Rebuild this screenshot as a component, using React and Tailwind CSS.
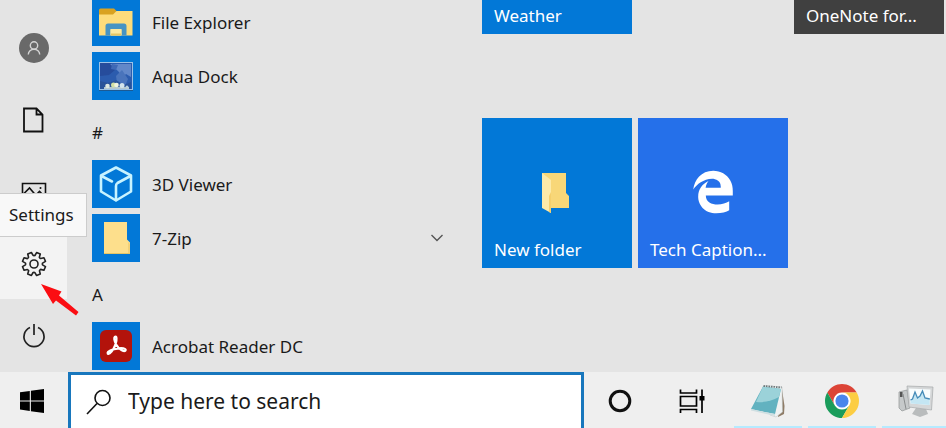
import React, { useState } from 'react';
import { FaEdgeLegacy } from 'react-icons/fa6';

const FileExplorerIcon = () => (
  <svg width="48" height="48" viewBox="0 0 48 48" aria-hidden="true">
    <path d="M7 12 a1.500 1.500 0 0 1 1.500-1.500 H22 l2.500 2.500 V17 H7z" fill="#d9a220" />
    <path d="M7 16.500 H21 L24.500 13 H40.500 V37.500 H7z" fill="#fddc7b" />
    <path d="M13.500 37.500 V28 a2.500 2.500 0 0 1 2.500-2.500 h16 a2.500 2.500 0 0 1 2.500 2.500 v9.500 h-5 V31.500 H18.500 v6z" fill="#4694c4" />
    <path d="M18.500 31 h11 v6.500 h-11z" fill="#fde9a0" />
    <path d="M19 35.500 h10 v2 h-10z" fill="#e6c664" />
  </svg>
);

const AquaDockIcon = () => (
  <svg width="48" height="48" viewBox="0 0 48 48" aria-hidden="true">
    <rect x="7" y="10" width="34" height="29" fill="#1c5a94" />
    <rect x="7.500" y="10.500" width="33" height="27" fill="#2c5cae" />
    <path d="M8 11 h11 l4 7 -6 5 -9 1z" fill="#264c9c" />
    <path d="M18 12 h21 v13 l-5 -3 -3 3 -5 -6z" fill="#6288c9" />
    <path d="M20 12 l6 1 -2 5 -5 -1z" fill="#3f69b6" />
    <path d="M24 24 l6 -6 6 9 -3 7 -8 -3z" fill="#4a74bb" />
    <path d="M8 29 l8 2 8 -3 8 5 7 -3 v7 H8z" fill="#2a5399" />
    <rect x="7.500" y="10.500" width="33" height="27" fill="none" stroke="#9cc2e7" />
    <path d="M12 36 h25" stroke="#b3c6cf" strokeWidth="2" />
    <circle cx="15.500" cy="34" r="2.300" fill="#dfe9e2" />
    <circle cx="21.500" cy="33" r="2.500" fill="#d3dfa3" />
    <circle cx="24.500" cy="33" r="2.300" fill="#f0f3df" />
    <circle cx="30" cy="33.500" r="2.500" fill="#d4e4ec" />
    <circle cx="35" cy="35" r="1.500" fill="#b9d0dc" />
  </svg>
);

const CubeIcon = () => (
  <svg width="48" height="48" viewBox="0 0 48 48" fill="none" stroke="#c8f3ff" strokeWidth="2.600" strokeLinejoin="round" strokeLinecap="round" aria-hidden="true">
    <path d="M24 7.500 L39 15.500 V31.500 L24 40.500 L9 31.500 V15.500z" />
    <path d="M9.500 16 L20 21.500 M38.500 16 L25.500 23 Q24 24 24 26 V40" />
  </svg>
);

const ZipFolderIcon = () => (
  <svg width="48" height="48" viewBox="0 0 48 48" aria-hidden="true">
    <path d="M12 8 H35 V25.500 L38 28.500 V40 H12z" fill="#fddf8c" />
    <path d="M36 28 L38 30 V40 H36z" fill="#f2d077" />
    <path d="M12 39 H38 V40 H12z" fill="#e5c568" />
  </svg>
);

const AcrobatIcon = () => (
  <svg width="48" height="48" viewBox="0 0 48 48" aria-hidden="true">
    <rect x="8" y="8" width="32" height="32" rx="6" fill="#b3130b" />
    <path
      d="M22.700 15 c2-1.500 2.500 2 .8 7.500 C21.500 28 17.500 33 15.800 31.600 C14.500 29.500 20 27 27 26.300 C33 25.800 34.500 27.500 33.300 28.800 C31 30.200 26.500 26.500 24.200 22.500 C22.500 19 21.600 16 22.700 15z"
      fill="none"
      stroke="#fff"
      strokeWidth="2.200"
      strokeLinejoin="round"
    />
  </svg>
);

const UserIcon = () => (
  <svg width="30" height="30" viewBox="0 0 30 30" fill="none" aria-hidden="true">
    <circle cx="15" cy="15" r="15" fill="#696969" />
    <circle cx="15" cy="12.500" r="3.700" stroke="#d4d4d4" strokeWidth="1.400" />
    <path d="M9.300 21.500 a5.700 5.200 0 0 1 11.400 0" stroke="#d4d4d4" strokeWidth="1.400" />
  </svg>
);

const DocumentIcon = () => (
  <svg width="24" height="26" viewBox="0 0 24 26" fill="none" stroke="#111" strokeWidth="1.800" aria-hidden="true">
    <path d="M2 1.500 H14.500 L20.500 7.500 V24.500 H2z M14.500 1.500 V7.500 H20.500" />
  </svg>
);

const PicturesIcon = () => (
  <svg width="26" height="20" viewBox="0 0 26 20" fill="none" stroke="#111" strokeWidth="1.600" aria-hidden="true">
    <path d="M1.500 1.500 h23 v17 h-23z M1.500 13 L8.500 6 L18 17 M15 13 l3.500-3.500 6 6" />
    <circle cx="19.500" cy="6" r="1" fill="#111" stroke="none" />
  </svg>
);

const GearIcon = () => (
  <svg width="26" height="26" viewBox="0 0 26 26" fill="none" stroke="#222" strokeWidth="1.600" strokeLinejoin="round" aria-hidden="true">
    <path
      transform="rotate(22.5 13 13)"
      d="M10.600 4.800 L11 1.400 H15 L15.400 4.800 Q16.500 5.600 17.100 5.400 L19.800 3.400 L22.600 6.200 L20.600 8.900 Q20.400 9.500 21.200 10.600 L24.600 11 V15 L21.200 15.400 Q20.400 16.500 20.600 17.100 L22.600 19.800 L19.800 22.600 L17.100 20.600 Q16.500 20.400 15.400 21.200 L15 24.600 H11 L10.600 21.200 Q9.500 20.400 8.900 20.600 L6.200 22.600 L3.400 19.800 L5.400 17.100 Q5.600 16.500 4.800 15.400 L1.400 15 V11 L4.800 10.600 Q5.600 9.500 5.400 8.900 L3.400 6.200 L6.200 3.400 L8.900 5.400 Q9.500 5.600 10.600 4.800z"
    />
    <circle cx="13" cy="13" r="4" />
  </svg>
);

const PowerIcon = () => (
  <svg width="26" height="26" viewBox="0 0 26 26" fill="none" stroke="#222" strokeWidth="1.700" aria-hidden="true">
    <path d="M9 4.500 A10 10 0 1 0 17 4.500 M13 1 V12" />
  </svg>
);

const WindowsIcon = () => (
  <svg width="24" height="24" viewBox="0 0 24 24" fill="#000" aria-hidden="true">
    <path d="M0 3.300 L9.800 2 V11.400 H0z M10.900 1.800 L24 0 V11.400 H10.900z M0 12.500 H9.800 V22 L0 20.600z M10.900 12.500 H24 V24 L10.900 22.200z" />
  </svg>
);

const SearchIcon = () => (
  <svg width="26" height="26" viewBox="0 0 26 26" fill="none" stroke="#111" strokeWidth="1.600" aria-hidden="true">
    <circle cx="16.500" cy="9" r="7.500" />
    <path d="M11 14.500 L1 25" />
  </svg>
);

const CortanaIcon = () => (
  <svg width="24" height="24" viewBox="0 0 24 24" aria-hidden="true">
    <circle cx="12" cy="12" r="9.800" fill="none" stroke="#111" strokeWidth="3" />
  </svg>
);

const TaskViewIcon = () => (
  <svg width="26" height="24" viewBox="0 0 26 24" fill="none" stroke="#000" strokeWidth="1.700" aria-hidden="true">
    <path d="M1.500 0.500 V4 H17.500 V0.500 M1.500 7.500 H17.500 V17 H1.500z M1.500 24 V20.500 H17.500 V24 M23 0.500 V24" />
    <rect x="20.500" y="7" width="5" height="4.500" fill="#000" stroke="none" />
  </svg>
);

const NotepadIcon = () => (
  <svg width="36" height="36" viewBox="0 0 36 36" aria-hidden="true">
    <path d="M31.500 3 L34.500 23 L34 31 L28 34z" fill="#8f7c67" />
    <path d="M15 2.500 L32 4 L32.500 29 L26 34 L20 32z" fill="#f0f2f2" stroke="#b9c0c2" strokeWidth="0.500" />
    <path d="M13 3.500 L31 6 L25 31 Q14 29 1 26z" fill="#62b2c0" />
    <path d="M13 3.500 L31 6 L29 14 Q18 20 6 19z" fill="#9bd2d9" />
    <path d="M1 26 Q14 29 25 31 L25 33 L1 27.500z" fill="#cfdfe2" />
    <path d="M13.500 3 L31.500 4.500" stroke="#6d7779" strokeWidth="1.800" strokeDasharray="1.500 1" />
  </svg>
);

const ChromeIcon = () => (
  <svg width="34" height="34" viewBox="0 0 48 48" aria-hidden="true">
    <circle cx="24" cy="24" r="13" fill="#fff" />
    <path d="M24 12 H44.780 A24 24 0 0 0 3.220 12 L13.600 30 A12 12 0 0 1 24 12z" fill="#dc4437" />
    <path d="M3.220 12 A24 24 0 0 0 24 48 L34.400 30 A12 12 0 0 1 13.600 30z" fill="#1a9c5b" />
    <path d="M44.780 12 A24 24 0 0 1 24 48 L34.400 30 A12 12 0 0 0 24 12z" fill="#fccd43" />
    <circle cx="24" cy="24" r="9.300" fill="#4a86ec" />
  </svg>
);

const MonitorIcon = () => (
  <svg width="36" height="34" viewBox="0 0 36 34" aria-hidden="true">
    <path d="M1 8 L9 6 L12 24 L4 27 L1 24z" fill="#c6c9ca" stroke="#8f9394" strokeWidth="0.700" />
    <path d="M2 8 h2.500 v5 h-2.500z" fill="#555" />
    <path d="M5 10 L8 25" stroke="#8a8d8e" strokeWidth="1" />
    <path d="M18 24 L28 25 L30 30 L22 33 L14 30z" fill="#b9bcbd" />
    <path d="M9 2 L35 3 L33.500 26 L11 23z" fill="#d5d7d8" stroke="#a5a8a9" strokeWidth="0.700" />
    <path d="M11 4.500 L32.500 5.500 L31.500 21 L12.500 19.500z" fill="#f8fcfd" />
    <path d="M12.500 16 L14.500 15 L17 8 L19.500 14 L22 12 L24.500 7 L27 14 L31.800 15 L31.500 21 L12.500 19.500z" fill="#c4e6f3" />
    <path d="M12.500 16 L14.500 15 L17 8 L19.500 14 L22 12 L24.500 7 L27 14 L31.800 15" fill="none" stroke="#458bb8" strokeWidth="1.300" />
  </svg>
);

const NewFolderIcon = () => (
  <svg width="34" height="42" viewBox="0 0 34 42" aria-hidden="true">
    <path d="M2 1 H26 V21 L29 24 V36 H8z" fill="#f8d778" />
    <path d="M2 1 L11 8 V41 L2 36z" fill="#fdeaa9" />
    <path d="M9 24 L11 20 V41 L9 40z" fill="#f5cf6c" />
  </svg>
);

const apps = [
  { name: 'File Explorer', icon: FileExplorerIcon },
  { name: 'Aqua Dock', icon: AquaDockIcon },
  { heading: '#' },
  { name: '3D Viewer', icon: CubeIcon },
  { name: '7-Zip', icon: ZipFolderIcon, folder: true },
  { heading: 'A' },
  { name: 'Acrobat Reader DC', icon: AcrobatIcon },
];

const railItems = [
  { name: 'Account', icon: UserIcon },
  { name: 'Documents', icon: DocumentIcon },
  { name: 'Pictures', icon: PicturesIcon },
  { name: 'Settings', icon: GearIcon, active: true },
  { name: 'Power', icon: PowerIcon },
];

const runningApps = [
  { name: 'Notepad', icon: NotepadIcon },
  { name: 'Google Chrome', icon: ChromeIcon },
  { name: 'Task Manager', icon: MonitorIcon },
];

const Rail = () => (
  <nav className="flex w-[67px] shrink-0 flex-col justify-end pb-px" aria-label="Start menu">
    {railItems.map(({ name, icon: Icon, active }) => (
      <div key={name} className="relative shrink-0">
        <button
          aria-label={name}
          className={`flex h-[72px] w-full items-center justify-center pt-0.5 ${active ? 'bg-[#f3f3f3]' : 'hover:bg-[#eeeeee]'}`}
        >
          <Icon />
        </button>

        {/* Tooltip and pointer for the highlighted item */}
        {active && (
          <>
            <div role="tooltip" className="absolute -top-[34px] left-0 z-10 flex h-11 items-center border border-l-0 border-[#cccccc] bg-[#f8f8f8] pr-3 pl-[9px] text-[17px] whitespace-nowrap">
              {name}
            </div>
            <svg className="absolute top-14 left-10 z-10" width="40" height="34" viewBox="0 0 40 34" aria-hidden="true">
              <path d="M1 1 L21.500 8.500 L19 12.500 L38.500 29 L36 32.500 L16 17.500 L13 21z" fill="#fb0d12" />
            </svg>
          </>
        )}
      </div>
    ))}
  </nav>
);

const AppList = () => (
  <ul className="flex w-[379px] flex-col justify-end pl-[25px]">
    {apps.map(({ name, heading, icon: Icon, folder }) => (
      <li key={name || heading} className="h-[54px] shrink-0 pt-1 pb-0.5">
        {heading ? (
          <button className="flex h-full w-full items-center pt-1.5">{heading}</button>
        ) : (
          <button className="flex h-full w-full items-center gap-3 text-left">
            <span className="h-12 w-12 shrink-0 bg-[#0278d7]">
              <Icon />
            </span>
            <span className="flex-1 truncate pt-0.5">{name}</span>
            {folder && (
              <svg className="mr-[3px]" width="12" height="8" viewBox="0 0 12 8" fill="none" stroke="#555" strokeWidth="1.400" aria-hidden="true">
                <path d="M0.500 1 L6 6.500 L11.500 1" />
              </svg>
            )}
          </button>
        )}
      </li>
    ))}
  </ul>
);

const Tile = ({ name, className, children }) => (
  <button className={`flex h-[150px] flex-col text-left text-white ${className}`}>
    <span className="flex w-full flex-1 items-end justify-center">{children}</span>
    <span className="w-full truncate px-3 pt-6 pb-1.5 leading-6">{name}</span>
  </button>
);

const Tiles = () => (
  <div className="flex flex-1 flex-col justify-end gap-[84px] pb-[104px] pl-9">
    <div className="grid grid-cols-[repeat(3,150px)] gap-1.5">
      <Tile name="Weather" className="bg-[#0278d7]" />
      <Tile name="OneNote for..." className="col-start-3 bg-[#404040]" />
    </div>
    <div className="grid grid-cols-[repeat(3,150px)] gap-1.5">
      <Tile name="New folder" className="bg-[#0278d7]">
        <NewFolderIcon />
      </Tile>
      <Tile name="Tech Caption..." className="bg-[#2570ea]">
        <FaEdgeLegacy size={44} />
      </Tile>
    </div>
  </div>
);

const Taskbar = () => {
  const [query, setQuery] = useState('');

  return (
    <footer className="flex h-14 shrink-0 bg-[#efefef]">
      <button aria-label="Start" className="flex w-[68px] shrink-0 items-center justify-center pt-0.5 pr-1">
        <WindowsIcon />
      </button>

      <label className="flex w-[55%] max-w-[516px] items-center gap-4 border-3 border-b-0 border-[#1877bd] bg-white pl-[15px]">
        <SearchIcon />
        <input
          type="text"
          aria-label="Search"
          placeholder="Type here to search"
          value={query}
          onChange={(e) => setQuery(e.target.value)}
          className="min-w-0 flex-1 bg-transparent text-[21px] text-[#1a1a1a] outline-none placeholder:text-[#1a1a1a]"
        />
      </label>

      <div className="flex min-w-0 flex-1 overflow-hidden">
        <button aria-label="Cortana" className="flex w-[72px] shrink-0 items-center justify-center pt-0.5">
          <CortanaIcon />
        </button>
        <button aria-label="Task View" className="flex w-[72px] shrink-0 items-center justify-center pt-0.5">
          <TaskViewIcon />
        </button>
        <div className="flex gap-1.5 pl-1.5">
          {runningApps.map(({ name, icon: Icon }) => (
            <button
              key={name}
              aria-label={name}
              className="flex w-[68px] shrink-0 items-center justify-center border-b-2 border-[#b5eaff] pt-1"
            >
              <Icon />
            </button>
          ))}
        </div>
      </div>
    </footer>
  );
};

const App = () => (
  <div className="flex h-screen flex-col overflow-hidden bg-[#e4e4e4] font-['Noto_Sans','Open_Sans',sans-serif] text-[17px] text-[#1a1a1a]">
    <main className="flex min-h-0 flex-1 overflow-hidden">
      <Rail />
      <AppList />
      <Tiles />
    </main>
    <Taskbar />
  </div>
);

export default App;
